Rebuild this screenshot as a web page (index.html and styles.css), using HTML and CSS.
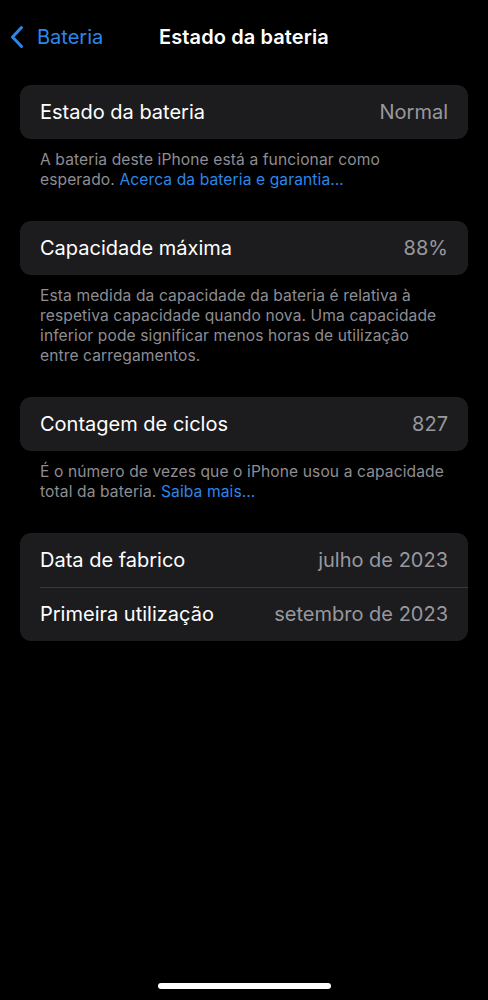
FILE: index.html
```html
<!DOCTYPE html>
<html lang="pt">
<head>
<meta charset="utf-8">
<title>Estado da bateria</title>
<link rel="stylesheet" href="styles.css">
</head>
<body>
<div class="screen">
  <header class="nav">
    <a class="back" href="#">
      <svg class="chev" width="14" height="24" viewBox="0 0 14 24"><path d="M11.5 2.5 L2.5 12 L11.5 21.5" fill="none" stroke="currentColor" stroke-width="3" stroke-linecap="round" stroke-linejoin="round"/></svg>
      <span>Bateria</span>
    </a>
    <h1 class="title">Estado da bateria</h1>
  </header>

  <section class="group">
    <div class="card">
      <div class="row"><span class="label">Estado da bateria</span><span class="value">Normal</span></div>
    </div>
    <p class="foot">A bateria deste iPhone está a funcionar como<br>esperado. <a href="#">Acerca da bateria e garantia…</a></p>
  </section>

  <section class="group">
    <div class="card">
      <div class="row"><span class="label">Capacidade máxima</span><span class="value">88%</span></div>
    </div>
    <p class="foot">Esta medida da capacidade da bateria é relativa à<br>respetiva capacidade quando nova. Uma capacidade<br>inferior pode significar menos horas de utilização<br>entre carregamentos.</p>
  </section>

  <section class="group">
    <div class="card">
      <div class="row"><span class="label">Contagem de ciclos</span><span class="value">827</span></div>
    </div>
    <p class="foot">É o número de vezes que o iPhone usou a capacidade<br>total da bateria. <a href="#">Saiba mais…</a></p>
  </section>

  <section class="group">
    <div class="card">
      <div class="row"><span class="label">Data de fabrico</span><span class="value">julho de 2023</span></div>
      <div class="row"><span class="label">Primeira utilização</span><span class="value">setembro de 2023</span></div>
    </div>
  </section>

  <div class="home"></div>
</div>
</body>
</html>
```

FILE: styles.css
```css
html, body {
  margin: 0;
  padding: 0;
  background: #000;
}
body {
  font-family: Inter, "Noto Sans", "Liberation Sans", sans-serif;
  color: #fff;
  -webkit-font-smoothing: antialiased;
}
.screen {
  width: 488px;
  height: 1000px;
  display: flex;
  flex-direction: column;
  position: relative;
  overflow: hidden;
}
.nav {
  height: 74px;
  position: relative;
  display: flex;
  justify-content: center;
  box-sizing: border-box;
}
.back {
  position: absolute;
  left: 10px;
  top: 25px;
  display: flex;
  align-items: center;
  gap: 13px;
  color: #2c87ea;
  text-decoration: none;
  font-size: 20px;
  line-height: 24px;
}
.chev { display: block; }
.title {
  margin: 0;
  font-size: 20px;
  font-weight: 600;
  line-height: 24px;
  padding-top: 25px;
  letter-spacing: 0.1px;
}
.group {
  padding: 11px 20px 0;
}
.group + .group {
  padding-top: 31px;
}
.card {
  background: #1c1c1e;
  border-radius: 11px;
  overflow: hidden;
}
.row {
  height: 54px;
  display: flex;
  align-items: center;
  justify-content: space-between;
  padding: 0 20px;
  font-size: 20px;
  position: relative;
}
.row + .row::before {
  content: "";
  position: absolute;
  left: 20px;
  right: 0;
  top: 0;
  height: 1px;
  background: #38383a;
}
.label { color: #fff; }
.value { color: #98989d; }
.foot {
  margin: 11px 0 0;
  padding: 0 8px 0 20px;
  font-size: 15.6px;
  letter-spacing: 0.1px;
  line-height: 20px;
  color: #8d8d92;
  white-space: nowrap;
}
.foot a {
  color: #2c87ea;
  text-decoration: none;
}
.home {
  position: absolute;
  left: 158px;
  top: 983px;
  width: 173px;
  height: 6px;
  border-radius: 3px;
  background: #fff;
}
```
